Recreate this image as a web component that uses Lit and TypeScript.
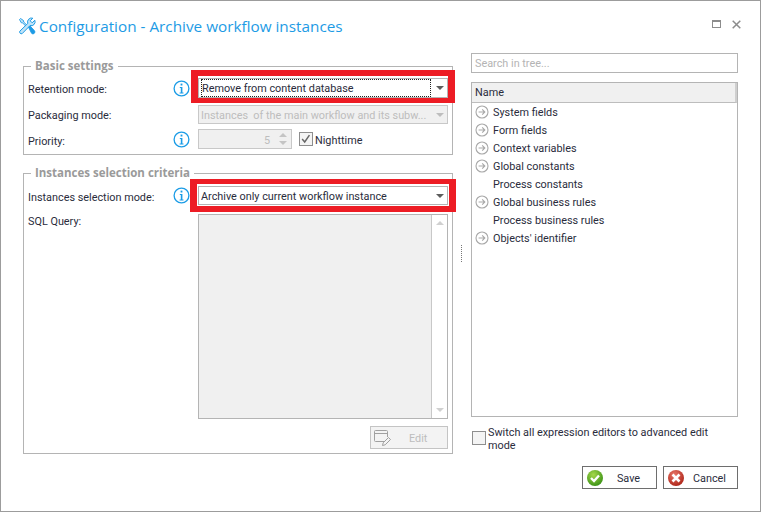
import { LitElement, html, css, svg } from "lit";
import { customElement } from "lit/decorators.js";

const info = html`<svg class="info" width="17" height="17" viewBox="0 0 17 17"><circle cx="8.5" cy="8.5" r="7.4" fill="#fff" stroke="#1b9ce6" stroke-width="1.3"/><rect x="7.6" y="3.6" width="1.8" height="1.9" fill="#1b9ce6"/><path d="M6.800 7h2.600v5.400h1.100v1H6.600v-1h1.200V8H6.800z" fill="#1b9ce6"/></svg>`;
const arrow = html`<svg class="arrow" width="14" height="14" viewBox="0 0 14 14"><circle cx="7" cy="7" r="6" fill="#fff" stroke="#a8a8a8" stroke-width="1.1"/><path d="M3.600 7h6.200M7.200 4.400 9.800 7l-2.600 2.600" fill="none" stroke="#a8a8a8" stroke-width="1.1"/></svg>`;
const caret = (c: string) => svg`<svg class="caret" width="8" height="4" viewBox="0 0 8 4"><path d="M0 0h8L4 4z" fill="${c}"/></svg>`;

const rows = [
  ["System fields", true],
  ["Form fields", true],
  ["Context variables", true],
  ["Global constants", true],
  ["Process constants", false],
  ["Global business rules", true],
  ["Process business rules", false],
  ["Objects' identifier", true],
] as const;

@customElement("app-root")
export class AppRoot extends LitElement {
  static styles = css`
    :host { display: block; width: 761px; height: 512px; font-family: Roboto, sans-serif; font-size: 10.85px; color: #2a2c3c; }
    * { box-sizing: border-box; }
    .window { width: 761px; height: 512px; border: 1px solid #9c9c9c; background: #fff; display: flex; flex-direction: column; }
    .title { height: 40px; padding: 10px 19px 0 17px; display: flex; align-items: center; flex: none; }
    .title h1 { margin: 0 0 0 3px; font-family: "Open Sans", sans-serif; font-size: 15.3px; font-weight: 400; color: #1d9be5; flex: 1; white-space: pre; }
    .controls { display: flex; gap: 10px; align-items: center; margin-top: -4px; }
    .main { flex: 1; display: flex; padding: 12px 22px 0 22px; min-height: 0; }
    .left { width: 430px; display: flex; flex-direction: column; flex: none; }
    fieldset { margin: 0; padding: 0 4px 0 4px; border: 1px solid #b4b4b4; min-width: 0; }
    legend { margin-left: 3px; padding: 0 4px; font-family: "Open Sans", sans-serif; font-size: 11.5px; font-weight: 700; color: #9a9a9a; line-height: 16px; }
    .basic { height: 97px; padding-top: 4px; margin-top: 5px; }
    .crit { height: 289px; margin-top: 10px; padding-top: 5px; }
    .row { display: flex; align-items: center; height: 20px; }
    .basic .r2 { margin-top: 7px; height: 19px; }
    .basic .r3 { margin-top: 5px; }
    .lbl { width: 145px; flex: none; white-space: nowrap; padding-top: 3px; }
    .r2 .lbl { padding-top: 1px; }
    .r3 .lbl { padding-top: 4px; }
    .ic { width: 25px; flex: none; display: flex; }
    .info { display: block; }
    .ctl { position: relative; width: 250px; height: 100%; flex: none; border: 1px solid #b4b4b4; display: flex; align-items: center; padding: 0 3px 0 2px; background: #fff; }
    .ctl > span { flex: 1; white-space: pre; overflow: hidden; padding-top: 2px; }
    .caret { display: block; flex: none; }
    .focus { outline: 1px dotted #222; outline-offset: -1px; height: 18px; line-height: 15px; padding-left: 1px; margin-right: 5px; }
    .dis { color: #bdbdbd; background: #f0f0f0; border-color: #c8c8c8; }
    .mark { position: absolute; pointer-events: none; border: 0 solid #ed1c24; }
    .m1 { left: -8px; right: -8px; top: -9px; bottom: -6px; border-width: 6px 7px 5px 7px; }
    .m2 { left: -9px; right: -9px; top: -8px; bottom: -8px; border-width: 5px 7px 6px 7px; }
    .spin { width: 94px; padding: 0 2px 0 4px; }
    .spin > span { text-align: right; padding-right: 7px; }
    .updown { display: flex; flex-direction: column; gap: 4px; width: 12px; align-items: center; }
    .check { display: flex; align-items: center; gap: 2px; margin-left: 7px; }
    .check .txt { padding-top: 3px; }
    .box { width: 14px; height: 14px; border: 1px solid #8e8e8e; background: #f4f4f4; flex: none; display: block; }
    .r1c { height: 19px; }
    .sql { align-items: flex-start; height: 205px; margin-top: 9px; }
    .sql .lbl { padding-top: 1px; }
    .area { height: 205px; width: 250px; flex: none; border: 1px solid #b4b4b4; display: flex; }
    .area i { flex: 1; background: #f0f0f0; }
    .sb { width: 16px; border-left: 1px solid #c8c8c8; background: #fff; display: flex; flex-direction: column; justify-content: space-between; align-items: center; padding: 6px 0; }
    .editrow { display: flex; justify-content: flex-end; margin-top: 7px; }
    .edit { width: 78px; height: 23px; border: 1px solid #c4c4c4; background: #f3f3f3; display: flex; align-items: center; color: #bdbdbd; padding-left: 2px; }
    .edit span { margin-left: 17px; padding-top: 2px; }
    .split { width: 18px; flex: none; display: flex; justify-content: center; align-items: flex-start; padding-top: 192px; }
    .split i { width: 2px; height: 17px; border-left: 1px dotted #777; display: block; margin-left: -1px; }
    .right { width: 267px; flex: none; display: flex; flex-direction: column; }
    .search { height: 20px; border: 1px solid #b4b4b4; padding-left: 3px; color: #b4b4b4; line-height: 20px; }
    .tree { margin-top: 9px; height: 335px; border: 1px solid #b4b4b4; }
    .th { height: 20px; background: #f0f0f0; border-bottom: 1px solid #bdbdbd; border-right: 2px solid #cfcfcf; padding-left: 3px; line-height: 20px; }
    .tree ul { list-style: none; margin: 0; padding: 0; }
    .tree li { height: 18px; display: flex; align-items: center; padding-left: 3px; }
    .tree .arrow { flex: none; display: block; }
    .tree .t { margin-left: 18px; white-space: nowrap; }
    .tree svg + .t { margin-left: 4px; }
    .adv { display: flex; gap: 2px; margin-top: 9px; line-height: 13px; padding-left: 1px; }
    .adv .box { margin-top: 5px; }
    .foot { display: flex; justify-content: flex-end; gap: 6px; margin-top: 14px; }
    .btn { width: 75px; height: 23px; border: 1px solid #6e6e6e; display: flex; align-items: center; padding-left: 3px; background: #fff; }
    .btn span { flex: 1; text-align: center; padding: 2px 3px 0 0; }
  `;

  render() {
    return html`<div class="window">
      <div class="title">
        <svg width="18" height="18" viewBox="0 0 18 18" fill="none" stroke="#1d9be5">
          <path d="M1.500 2.500 2.500 1.500l3 2 .2 1.500 2.800 2.800-1 1L4.700 6 3.300 5.800z" fill="#bfe3f8" stroke-width=".9"/>
          <path d="M10 9.200 11.200 8l5.100 5.600a1.900 1.900 0 0 1-2.700 2.700z" fill="#1d9be5" stroke-width=".9"/>
          <path d="M16.800 3.200 14.200 5.800 12.200 3.800 14.800 1.200A4 4 0 0 0 9.800 6.400L1.800 14.200A1.800 1.800 0 0 0 4.200 16.600L12 8.600A4 4 0 0 0 16.800 3.200z" fill="#bfe3f8" stroke-width="1"/>
        </svg>
        <h1>Configuration - Archive workflow instances</h1>
        <div class="controls">
          <svg width="10" height="8" viewBox="0 0 10 8"><rect x=".5" y=".5" width="8" height="7" fill="none" stroke="#8c8c8c"/><rect x="0" y="0" width="9" height="2" fill="#8c8c8c"/></svg>
          <svg width="9" height="9" viewBox="0 0 9 9"><path d="M.7.7l7.600 7.600M8.300.7.700 8.300" stroke="#8c8c8c" stroke-width="1.500"/></svg>
        </div>
      </div>
      <div class="main">
        <div class="left">
          <fieldset class="basic">
            <legend>Basic settings</legend>
            <div class="row">
              <span class="lbl">Retention mode:</span><span class="ic">${info}</span>
              <div class="ctl"><span class="focus">Remove from content database</span>${caret("#5c5c5c")}<div class="mark m1"></div></div>
            </div>
            <div class="row r2">
              <span class="lbl">Packaging mode:</span><span class="ic"></span>
              <div class="ctl dis"><span>Instances  of the main workflow and its subw...</span>${caret("#bdbdbd")}</div>
            </div>
            <div class="row r3">
              <span class="lbl">Priority:</span><span class="ic">${info}</span>
              <div class="ctl dis spin"><span>5</span>
                <div class="updown"><svg width="8" height="4" viewBox="0 0 8 4"><path d="M0 4h8L4 0z" fill="#c4c4c4"/></svg>${caret("#c4c4c4")}</div>
              </div>
              <label class="check"><svg class="box" viewBox="0 0 14 14"><path d="M2.500 7 5.500 10.500 11 2.500" fill="none" stroke="#666" stroke-width="1.700"/></svg><span class="txt">Nighttime</span></label>
            </div>
          </fieldset>
          <fieldset class="crit">
            <legend>Instances selection criteria</legend>
            <div class="row r1c">
              <span class="lbl">Instances selection mode:</span><span class="ic">${info}</span>
              <div class="ctl"><span>Archive only current workflow instance</span>${caret("#5c5c5c")}<div class="mark m2"></div></div>
            </div>
            <div class="row sql">
              <span class="lbl">SQL Query:</span><span class="ic"></span>
              <div class="area"><i></i><div class="sb">
                <svg width="8" height="4" viewBox="0 0 8 4"><path d="M0 4h8L4 0z" fill="#d0d0d0"/></svg>${caret("#d0d0d0")}
              </div></div>
            </div>
            <div class="editrow">
              <div class="edit">
                <svg width="19" height="19" viewBox="0 0 19 19" fill="none" stroke="#a0a0a0"><path d="M11 13.500H2.500a1 1 0 0 1-1-1v-9a1 1 0 0 1 1-1h11a1 1 0 0 1 1 1v5.500M1.500 5.500h13"/><path d="M9.500 17.500l.7-2.700 5.300-5.300 2 2-5.300 5.300z" /></svg>
                <span>Edit</span>
              </div>
            </div>
          </fieldset>
        </div>
        <div class="split"><i></i></div>
        <div class="right">
          <div class="search">Search in tree...</div>
          <div class="tree">
            <div class="th">Name</div>
            <ul>
              ${rows.map(([t, a]) => html`<li>${a ? arrow : ""}<span class="t">${t}</span></li>`)}
            </ul>
          </div>
          <div class="adv"><span class="box"></span><span>Switch all expression editors to advanced edit mode</span></div>
          <div class="foot">
            <div class="btn save">
              <svg width="18" height="18" viewBox="0 0 18 18"><defs><radialGradient id="g" cx=".4" cy=".3" r=".8"><stop offset="0" stop-color="#a6d84a"/><stop offset="1" stop-color="#2f8a10"/></radialGradient></defs><circle cx="9" cy="9" r="8" fill="url(#g)"/><path d="M5 9l3 3 5-5.500" fill="none" stroke="#fff" stroke-width="2.300"/></svg>
              <span>Save</span>
            </div>
            <div class="btn">
              <svg width="18" height="18" viewBox="0 0 18 18"><defs><radialGradient id="r" cx=".4" cy=".3" r=".8"><stop offset="0" stop-color="#e8786a"/><stop offset="1" stop-color="#a81c10"/></radialGradient></defs><circle cx="9" cy="9" r="8" fill="url(#r)"/><path d="M5.500 5.500l7 7M12.500 5.500l-7 7" fill="none" stroke="#fff" stroke-width="2.600"/></svg>
              <span>Cancel</span>
            </div>
          </div>
        </div>
      </div>
    </div>`;
  }
}
